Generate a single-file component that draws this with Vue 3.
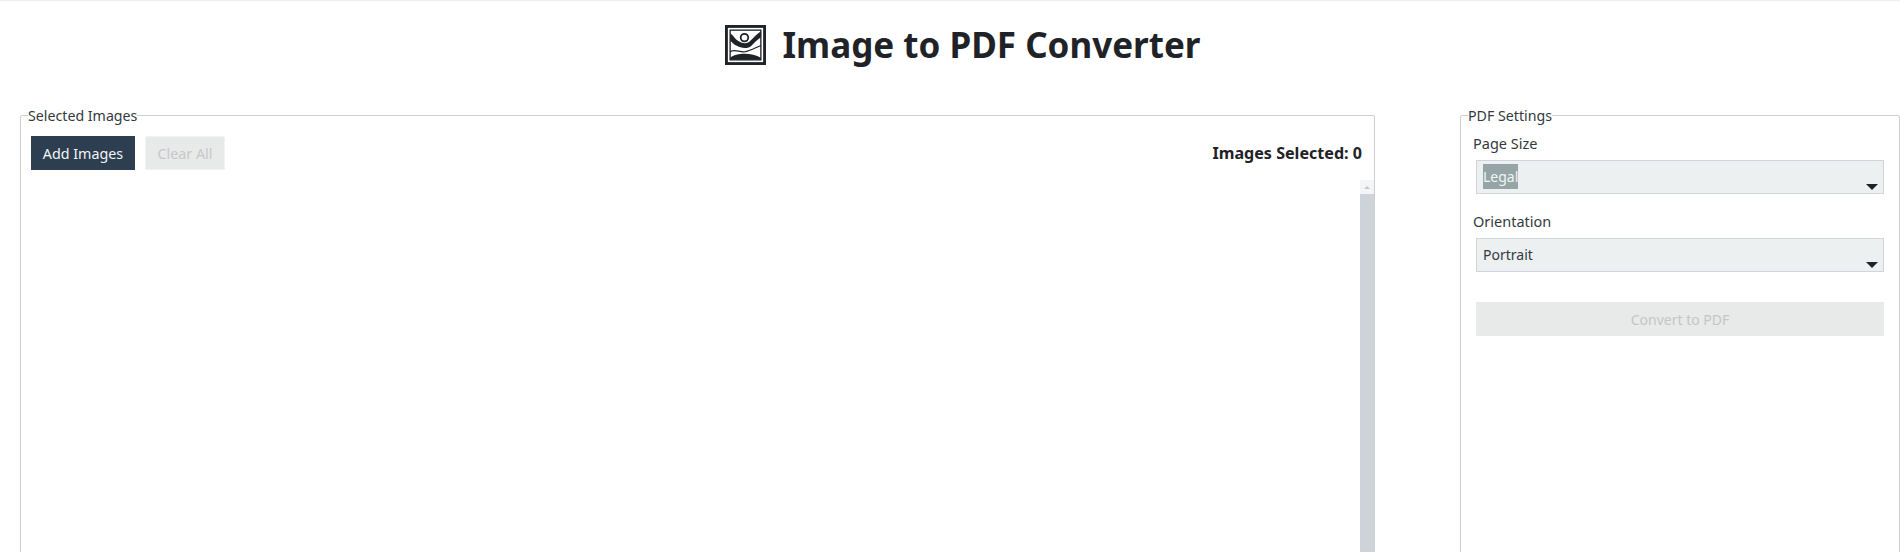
<script setup>
const pageSize = 'Legal'
const orientation = 'Portrait'
const count = 0
</script>

<template>
  <div class="app">
    <header class="title">
      <svg class="logo" viewBox="0 0 40 39" aria-hidden="true">
        <rect x="1.4" y="1.4" width="37.2" height="36.2" fill="#fff" stroke="#1f2327" stroke-width="2.8" />
        <rect x="5" y="5" width="30" height="29" fill="none" stroke="#1f2327" stroke-width="1.3" />
        <circle cx="19" cy="12.3" r="3.7" fill="#fff" stroke="#1f2327" stroke-width="1.7" />
        <path d="M5 8 C8 10 10 14 13 15.5 C18 18.5 22 18.5 25 15 C28 12 31 9 35 6 L35 12 C31 15 28 18 25 21 C20 24 15 22 11 20 C9 19 7 17 5 15 Z" fill="#1f2327" />
        <path d="M5 26 C10 23 14 27 20 26 C25 25 30 22 35 20" fill="none" stroke="#1f2327" stroke-width="1.2" />
        <path d="M5 34 L5 32 C11 27 26 26.5 35 32 L35 34 Z" fill="#1f2327" />
      </svg>
      <h1>Image to PDF Converter</h1>
    </header>

    <main class="columns">
      <fieldset class="panel images">
        <legend>Selected Images</legend>
        <div class="toolbar">
          <button class="btn primary">Add Images</button>
          <button class="btn ghost" disabled>Clear All</button>
          <span class="counter">Images Selected: {{ count }}</span>
        </div>
        <div class="list">
          <div class="scrollbar">
            <div class="arrow"><span></span></div>
            <div class="thumb"></div>
          </div>
        </div>
      </fieldset>

      <fieldset class="panel settings">
        <legend>PDF Settings</legend>
        <label class="field-label">Page Size</label>
        <div class="select"><span class="selected">{{ pageSize }}</span><i class="caret"></i></div>
        <label class="field-label second">Orientation</label>
        <div class="select"><span>{{ orientation }}</span><i class="caret"></i></div>
        <button class="convert" disabled>Convert to PDF</button>
      </fieldset>
    </main>
  </div>
</template>

<style>
html, body { margin: 0; background: #fff; overflow: hidden; }
</style>

<style scoped>
.app {
  width: 1900px;
  height: 552px;
  overflow: hidden;
  border-top: 1px solid #eeeeee;
  box-sizing: border-box;
  font-family: "Noto Sans", "Open Sans", sans-serif;
  color: #212529;
}
.title {
  display: flex;
  align-items: center;
  justify-content: center;
  gap: 16px;
  height: 88px;
  padding-left: 26px;
}
.logo { width: 41px; height: 40px; display: block; }
h1 {
  margin: 0;
  font-size: 35px;
  font-weight: 700;
  line-height: 44px;
  color: #1f2327;
}
.columns {
  display: flex;
  padding-left: 20px;
  gap: 85px;
  margin-top: 17px;
}
.panel {
  margin: 0;
  padding: 0;
  border: 1px solid #cfcfcf;
  border-radius: 2px;
  height: 520px;
  box-sizing: border-box;
  min-width: 0;
}
legend {
  font-size: 14.2px;
  line-height: 19px;
  padding: 0;
  margin-left: 7px;
  color: #343a40;
}
.images { width: 1355px; display: block; }
.settings { width: 440px; padding: 0 15px 0 0; }
.toolbar {
  display: flex;
  align-items: center;
  padding: 11px 12px 0 10px;
  gap: 10px;
}
.btn {
  font: inherit;
  font-size: 14.3px;
  height: 34px;
  border: 0;
  padding: 0;
}
.primary { width: 104px; background: #2c3e50; color: #f2f4f6; }
.ghost {
  width: 80px;
  background: #e8e9e9;
  color: #c6c8c9;
  border: 1px dotted #fbfbfb;
}
.counter {
  margin-left: auto;
  font-size: 16.1px;
  font-weight: 700;
  color: #1f2327;
}
.list {
  display: flex;
  justify-content: flex-end;
  margin-top: 10px;
  height: 400px;
}
.scrollbar { width: 14px; display: flex; flex-direction: column; }
.arrow {
  height: 14px;
  background: #f4f5f6;
  display: flex;
  align-items: center;
  justify-content: center;
}
.arrow span {
  border-left: 3px solid transparent;
  border-right: 3px solid transparent;
  border-bottom: 3px solid #c3c8cc;
}
.thumb { flex: 1; background: #cdd3d8; }
.field-label {
  display: block;
  font-size: 14.5px;
  line-height: 19px;
  margin: 9px 0 0 12px;
  color: #343a40;
}
.field-label.second { margin-top: 18px; }
.select {
  position: relative;
  height: 34px;
  margin: 7px 0 0 15px;
  background: #ecf0f1;
  border: 1px solid #ced4da;
  box-sizing: border-box;
  font-size: 14px;
  line-height: 32px;
  padding-left: 6px;
  color: #343a40;
}
.selected { background: #95a5a6; color: #f2f4f5; padding: 3px 0; }
.caret {
  position: absolute;
  right: 5px;
  bottom: 3px;
  border-left: 6px solid transparent;
  border-right: 6px solid transparent;
  border-top: 6px solid #1f2327;
}
.convert {
  display: block;
  width: calc(100% - 15px);
  height: 34px;
  margin: 30px 0 0 15px;
  border: 0;
  padding: 0;
  background: #e8e9e9;
  color: #c4c6c7;
  font: inherit;
  font-size: 14px;
}
</style>
